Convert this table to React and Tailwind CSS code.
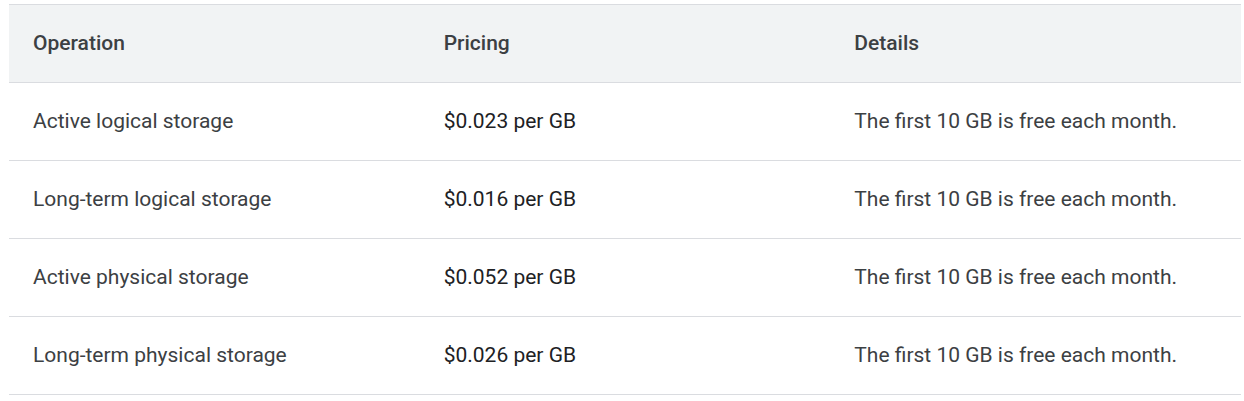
import React from 'react';

const rows = [
    { operation: 'Active logical storage', pricing: '$0.023 per GB', details: 'The first 10 GB is free each month.' },
    { operation: 'Long-term logical storage', pricing: '$0.016 per GB', details: 'The first 10 GB is free each month.' },
    { operation: 'Active physical storage', pricing: '$0.052 per GB', details: 'The first 10 GB is free each month.' },
    { operation: 'Long-term physical storage', pricing: '$0.026 per GB', details: 'The first 10 GB is free each month.' },
];

const App = () => {
    return (
        <div className="w-[1244px] h-[401px] bg-white pt-[4px] pl-[9px] font-['Roboto',_'Liberation_Sans',_sans-serif] text-[21px] leading-[28px] text-[#3c4043]">
            <div className="w-[1232px]">
                <div className="grid grid-cols-3 h-[79px] bg-[#f1f3f4] border-y border-[#dadce0] font-medium">
                    <div className="flex items-center pl-6 pb-[2px]">Operation</div>
                    <div className="flex items-center pl-6 pb-[2px]">Pricing</div>
                    <div className="flex items-center pl-6 pb-[2px]">Details</div>
                </div>
                {rows.map((row) => (
                    <div key={row.operation} className="grid grid-cols-3 h-[78px] border-b border-[#dadce0]">
                        <div className="flex items-center pl-6 pb-[2px]">{row.operation}</div>
                        <div className="flex items-center pl-6 pb-[2px] text-[#202124]">{row.pricing}</div>
                        <div className="flex items-center pl-6 pb-[2px]">{row.details}</div>
                    </div>
                ))}
            </div>
        </div>
    );
};

export default App;
